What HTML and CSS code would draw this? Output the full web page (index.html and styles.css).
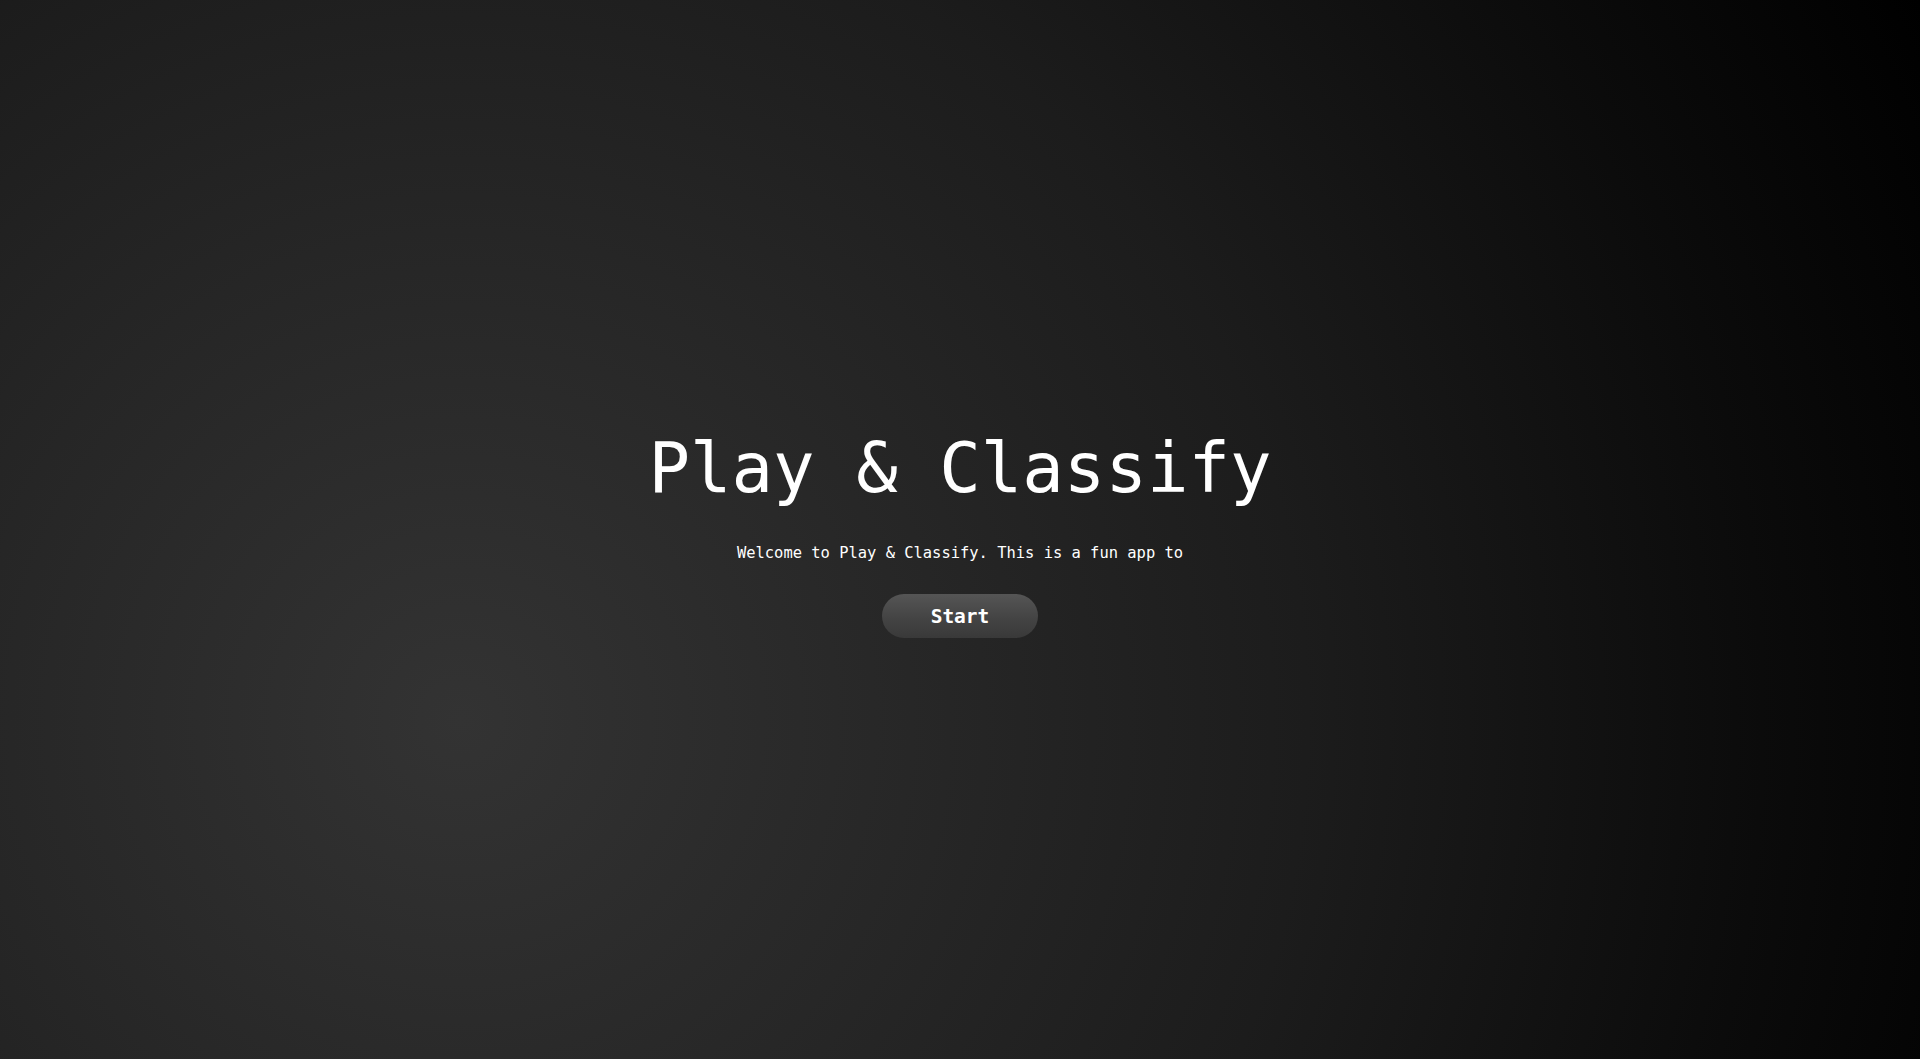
FILE: index.html
```html
<!DOCTYPE html>
<html lang="en">
<head>
<meta charset="utf-8">
<title>Play &amp; Classify</title>
<link rel="stylesheet" href="styles.css">
</head>
<body>
<main class="welcome">
  <h1 class="title">Play &amp; Classify</h1>
  <p class="intro">Welcome to Play &amp; Classify. This is a fun app to</p>
  <button class="start-btn" type="button">Start</button>
</main>
</body>
</html>
```

FILE: styles.css
```css
html, body {
  margin: 0;
  padding: 0;
  height: 100%;
}

body {
  background: radial-gradient(circle farthest-corner at 24% 68%, #333333 0%, #262626 30%, #1c1c1c 52%, #0b0b0b 80%, #000000 100%);
  color: #ffffff;
  font-family: "DejaVu Sans Mono", "Liberation Mono", monospace;
  overflow: hidden;
}

.welcome {
  height: 100%;
  box-sizing: border-box;
  padding-top: 7px;
  display: flex;
  flex-direction: column;
  align-items: center;
  justify-content: center;
}

.title {
  margin: 0;
  font-size: 69px;
  font-weight: normal;
  line-height: 80px;
  letter-spacing: 0;
}

.intro {
  margin: 36px 0 0;
  font-size: 15.45px;
  line-height: 18px;
}

.start-btn {
  margin-top: 32px;
  width: 156px;
  height: 44px;
  border: none;
  border-radius: 22px;
  background: linear-gradient(to bottom, #555555 0%, #444444 55%, #393939 100%);
  color: #ffffff;
  font-family: "DejaVu Sans Mono", "Liberation Mono", monospace;
  font-weight: bold;
  font-size: 19.5px;
  padding: 0;
  cursor: pointer;
}
```
